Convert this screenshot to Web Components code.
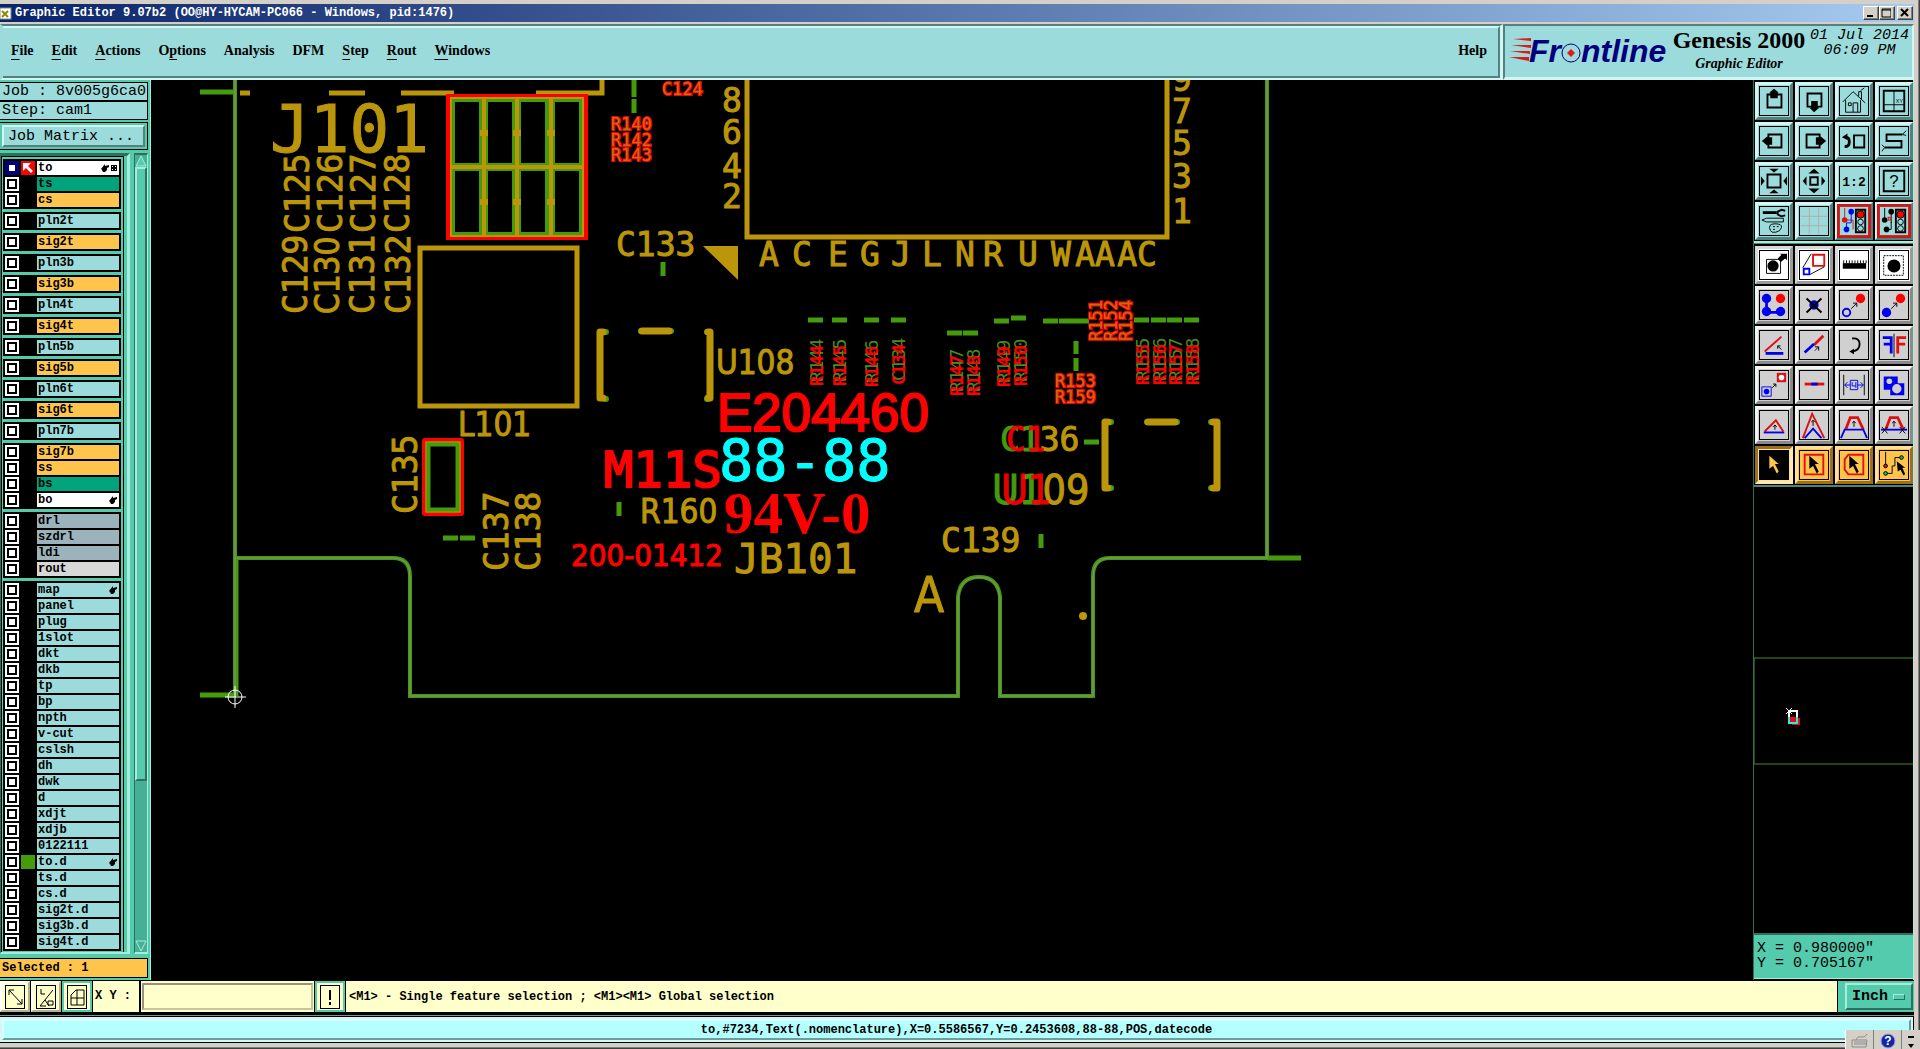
<!DOCTYPE html>
<html lang="en">
<head>
<meta charset="utf-8">
<title>Graphic Editor 9.07b2</title>
<style>
    :root {
        --teal: #54cbac;
        --teal-dark: #2f6f5e;
        --teal-light: #a6eddb;
        --pale: #9cdbdb;
        --pale-dark: #54807f;
        --pale-light: #d2f6f4;
        --cream: #ffffcc;
        --amber: #ffc44c;
        --mono: "Liberation Mono", monospace;
        --serif: "Liberation Serif", serif;
    }
    html, body {
        margin: 0;
        height: 100%;
        background: #d4d0c8;
        overflow: hidden;
    }
</style>
</head>
<body>
<gx-window caption="Graphic Editor 9.07b2 (OO@HY-HYCAM-PC066 - Windows, pid:1476)">
    <gx-menubar slot="menu"></gx-menubar>
    <gx-brand slot="menu"></gx-brand>
    <gx-sidebar slot="main"></gx-sidebar>
    <gx-board slot="main"></gx-board>
    <gx-tools slot="main"></gx-tools>
    <gx-prompt slot="foot">&lt;M1&gt; - Single feature selection ; &lt;M1&gt;&lt;M1&gt; Global selection</gx-prompt>
    <gx-status slot="foot">to,#7234,Text(.nomenclature),X=0.5586567,Y=0.2453608,88-88,POS,datecode</gx-status>
</gx-window>

<script>
"use strict";

// base class: every component only supplies its markup.
class Base extends HTMLElement {
    constructor() {
        super();
        this.attachShadow({ mode: 'open' });
        const temp = document.createElement('template');
        temp.innerHTML = `<style>:host,*{box-sizing:border-box}</style>` + this.render();
        this.shadowRoot.appendChild(temp.content.cloneNode(true));
    }
    render() { return ''; }
}

// window frame: caption bar, then menu, main and foot areas.
class GxWindow extends Base {
    render() {
        return `
<style>
    :host { display: flex; flex-direction: column; height: 100vh; padding: 4px 6px 6px 0; position: relative;
        background: #d4d0c8; box-shadow: inset -1px -1px #404040, inset -2px -2px #808080; }
    header { display: flex; align-items: center; height: 18px; padding: 0 1px 0 0; color: #fff;
        background: linear-gradient(90deg, #0a246a, #a6caf0); font: bold 12px/18px var(--mono); }
    header svg { margin-right: 3px; }
    h1 { flex: 1; margin: 0; font: inherit; white-space: pre; }
    header button { width: 16px; height: 14px; padding: 0; border: 1px solid; border-color: #fff #404040 #404040 #fff;
        background: #d4d0c8; box-shadow: inset -1px -1px #808080; display: flex; }
    header button:last-child { margin-left: 2px; }
    .menu { display: flex; height: 56px; margin-top: 2px; }
    .main { display: flex; flex: 1; min-height: 0; background: #000; }
    .tray { position: absolute; right: 0; bottom: 0; width: 75px; height: 19px; display: flex;
        background: #d4d0c8; border-left: 1px solid #fff; }
    .tray button { flex: 1; border: 0; border-right: 1px solid #808080; background: none; padding: 2px 0 0; line-height: 0; }
    .tray button:last-child { flex: 0 0 18px; border: 0; }
</style>
<header>
    <svg width="12" height="14"><rect y="2" width="11" height="11" fill="#fff" stroke="#888"/><path d="M2 5l6 6M8 5l-6 6" stroke="#8a8a00" stroke-width="2"/></svg>
    <h1></h1>
    <button aria-label="Minimize"><svg width="14" height="12"><path d="M3 9h6" stroke="#000" stroke-width="2"/></svg></button>
    <button aria-label="Maximize"><svg width="14" height="12"><path d="M2 2h9v8h-9zM2 3h9" fill="none" stroke="#000"/></svg></button>
    <button aria-label="Close"><svg width="14" height="12"><path d="M3 2l7 7M10 2l-7 7" stroke="#000" stroke-width="2"/></svg></button>
</header>
<div class="menu"><slot name="menu"></slot></div>
<div class="main"><slot name="main"></slot></div>
<slot name="foot"></slot>
<div class="tray">
    <button aria-label="Keyboard"><svg width="18" height="16"><path d="M1 7h15l-1 7h-14zM3 9h12M3 11h12M5 7q1-4 5-3t6-3" fill="none" stroke="#8c8c8c"/></svg></button>
    <button aria-label="Help"><svg width="16" height="16"><circle cx="8" cy="8" r="7" fill="#1525a8" stroke="#9aa4d8"/><text x="8" y="12" text-anchor="middle" fill="#fff" font-family="Liberation Sans" font-weight="bold" font-size="12">?</text></svg></button>
    <button aria-label="Options"><svg width="8" height="16"><path d="M1 4h6" stroke="#000" stroke-width="2"/><path d="M1 11h6l-3 4z"/></svg></button>
</div>`;
    }
    connectedCallback() {
        this.shadowRoot.querySelector('h1').textContent = this.getAttribute('caption');
    }
}
customElements.define('gx-window', GxWindow);

class GxMenubar extends Base {
    render() {
        // the underscore stands before the mnemonic letter
        const items = ['_File', '_Edit', '_Actions', 'O_ptions', 'Analysis', 'DFM', '_Step', '_Rout', '_Windows', 'Help'];
        return `
<style>
    :host { flex: 1; display: flex; background: var(--pale); border: solid; border-width: 2px 3px;
        border-color: var(--pale-dark) var(--pale-light) var(--pale-light) var(--pale); }
    nav { flex: 1; display: flex; align-items: center; gap: 18px; padding: 0 11px 2px 8px;
        border: solid; border-width: 2px 2px 2px 0; border-color: var(--pale-light) var(--pale-dark) var(--pale-dark); }
    button { padding: 0; border: 0; background: none; font: bold 14px/18px var(--serif); color: #000; }
    button:last-child { margin-left: auto; }
    u { text-underline-offset: 4px; }
</style>
<nav>${items.map(t => `<button>${t.replace(/_(.)/, '<u>$1</u>')}</button>`).join('')}</nav>`;
    }
}
customElements.define('gx-menubar', GxMenubar);

class GxBrand extends Base {
    render() {
        return `
<style>
    :host { flex: 0 0 411px; display: flex; align-items: flex-start; background: var(--pale); color: #000;
        border: solid; border-width: 2px 2px 3px 2px; border-color: var(--pale-dark) var(--pale-light) var(--pale-light) var(--pale-dark); }
    svg { flex: none; margin: 8px 3px 0 3px; }
    .name { flex: 0 0 136px; text-align: center; }
    h2 { margin: 0; font: bold 24px/28px var(--serif); white-space: nowrap; }
    em { font: italic bold 14px/20px var(--serif); display: block; }
    time { flex: 1; padding-top: 2px; text-align: center; font: italic 15px/15px var(--mono); white-space: nowrap; }
</style>
<svg width="160" height="34" role="img" aria-label="Frontline">
    <path d="M5 5l18-1v3zM3 11h20v3zM2 17h20v3zM1 23h20v4z" fill="#e01818"/>
    <text x="21" y="28" font-family="Liberation Sans" font-size="32" font-weight="bold" font-style="italic" fill="#00007c">Fr<tspan x="73">ntline</tspan></text>
    <circle cx="63" cy="19" r="9" fill="none" stroke="#00007c"/><path d="M63 15l4 4-4 4-4-4z" fill="#e01818"/>
</svg>
<div class="name"><h2>Genesis 2000</h2><em>Graphic Editor</em></div>
<time>01 Jul 2014<br>06:09 PM</time>`;
    }
}
customElements.define('gx-brand', GxBrand);

const HAND = '<path d="M0 5L4 0V2L8 1V3L6 4V6L4 8H2L1 6z" fill="#000"/>';

// one layer row: tick box, colour cell and name.
class GxLayer extends Base {
    render() {
        return `
<style>
    :host { display: block; --back: var(--pale); }
    :host([kind="doc"]) { --back: #fff; }
    :host([kind="mask"]) { --back: #00a37c; }
    :host([kind="sig"]) { --back: var(--amber); }
    :host([kind="drill"]) { --back: #9cb3bb; }
    :host([kind="rout"]) { --back: #d8d8d8; }
    label { display: flex; gap: 2px; height: 14px; font: bold 12px/14px var(--mono); color: #000; }
    input { appearance: none; flex: none; width: 14px; height: 14px; margin: 0; background: #fff; border: 2px solid #fff;
        box-shadow: inset 0 0 0 2px #000; }
    input:checked { border-color: #00007c; background: #fff; box-shadow: inset 0 0 0 2px #00007c; }
    i { flex: none; width: 14px; height: 14px; background: var(--cell, #000); }
    span { flex: 1; display: flex; align-items: center; gap: 2px; background: var(--back); padding: 0 2px 0 1px; }
    b { flex: 1; }
    svg { flex: none; }
</style>
<label><input type="checkbox"><i></i><span><b></b></span></label>`;
    }
    connectedCallback() {
        const root = this.shadowRoot;
        root.querySelector('b').textContent = this.getAttribute('name');
        root.querySelector('input').checked = this.hasAttribute('work');
        if (this.hasAttribute('work')) {
            root.querySelector('i').innerHTML = '<svg width="14" height="14" style="display:block;background:#f00"><path d="M2 2h8l-3 3 5 5-2 2-5-5-3 3z" fill="#fff"/></svg>';
        }
        if (this.hasAttribute('hand')) {
            root.querySelector('span').insertAdjacentHTML('beforeend', `<svg width="8" height="8">${HAND}</svg>`);
        }
        if (this.hasAttribute('work')) {
            root.querySelector('span').insertAdjacentHTML('beforeend', '<svg width="6" height="6"><path d="M0 0h6v6h-6zM1 1v1h1v-1zM4 1v1h1v-1zM1 4v1h1v-1zM4 4v1h1v-1z" fill-rule="evenodd"/></svg>');
        }
    }
}
customElements.define('gx-layer', GxLayer);

// groups of layers; "name:kind:flags"
const GROUPS = [
    'to:doc:work hand,ts:mask,cs:sig', 'pln2t', 'sig2t:sig', 'pln3b', 'sig3b:sig', 'pln4t', 'sig4t:sig', 'pln5b',
    'sig5b:sig', 'pln6t', 'sig6t:sig', 'pln7b', 'sig7b:sig,ss:sig,bs:mask,bo:doc:hand',
    'drl:drill,szdrl:drill,ldi:drill,rout:rout',
    'map::hand,panel,plug,1slot,dkt,dkb,tp,bp,npth,v-cut,cslsh,dh,dwk,d,xdjt,xdjb,0122111,to.d::hand,ts.d,cs.d,sig2t.d,sig3b.d,sig4t.d'
];

class GxSidebar extends Base {
    render() {
        const row = text => {
            const [name, kind = '', flags = ''] = text.split(':');
            const cell = name === 'to.d' ? ' style="--cell:#449b0c"' : '';
            return `<gx-layer name="${name}" kind="${kind}" ${flags}${cell}></gx-layer>`;
        };
        return `
<style>
    :host { flex: 0 0 151px; display: flex; flex-direction: column; padding: 2px 2px 2px 0; background: var(--teal);
        border-right: 1px solid var(--teal-light); font: 15px/17px var(--mono); color: #000; }
    .info { border: 1px solid #000; border-left: 0; background: var(--pale); height: 19px; padding-left: 2px; white-space: pre; }
    .box { border: 1px solid #000; border-left: 0; padding: 2px; margin-top: 2px; height: 28px; }
    .box button { width: 100%; height: 22px; padding: 0 4px; text-align: left; font: inherit; background: var(--pale);
        border: 2px solid; border-color: var(--pale-light) var(--pale-dark) var(--pale-dark) var(--pale-light); }
    .pane { flex: 1; min-height: 0; display: flex; gap: 4px; margin-top: 3px; }
    .frame { flex: 1; min-width: 0; display: flex; border-top: 3px solid var(--teal-dark); border-bottom: 2px solid var(--teal-light);
        border-right: 3px solid var(--teal-light); border-left: 1px solid var(--teal-dark); padding-right: 3px;
        box-shadow: inset -3px 0 var(--teal); }
    .list { flex: 1; border: 1px solid #000; border-bottom: 0; display: flex; flex-direction: column; gap: 3px; overflow: hidden;
        padding: 2px 2px 0 1px; }
    .group { flex: none; background: #000; padding: 2px; display: flex; flex-direction: column; gap: 2px; }
    .bar { flex: 0 0 14px; display: flex; flex-direction: column; background: #45b095; border: solid; border-width: 2px 1px;
        border-color: var(--teal-dark) var(--teal-light) var(--teal-light) var(--teal-dark); }
    .thumb { flex: 0 0 614px; background: var(--teal); border: 2px solid;
        border-color: var(--teal-light) var(--teal-dark) var(--teal-dark) var(--teal-light); }
    .space { flex: 1; }
    .picked { margin-top: 4px; height: 20px; border: 1px solid #000; border-left: 0; background: var(--amber); padding-left: 2px;
        font: bold 12px/18px var(--mono); }
</style>
<div class="info">Job : 8v005g6ca0</div>
<div class="info">Step: cam1</div>
<div class="box"><button>Job Matrix ...</button></div>
<div class="pane">
    <div class="frame"><div class="list">${GROUPS.map(g => `<div class="group">${g.split(',').map(row).join('')}</div>`).join('')}</div></div>
    <div class="bar">
        <svg width="12" height="12"><path d="M6 1L11 11H1z" fill="#54cbac" stroke="#a6eddb"/></svg>
        <div class="thumb"></div><div class="space"></div>
        <svg width="12" height="12"><path d="M6 11L11 1H1z" fill="#45b095" stroke="#a6eddb"/></svg>
    </div>
</div>
<div class="picked">Selected : 1</div>`;
    }
}
customElements.define('gx-sidebar', GxSidebar);

// the board drawing. Coordinates are those of the whole editor window.
class GxBoard extends Base {
    render() {
        const up = (x, y, t, c = '') => `<text class="${c}" transform="translate(${x} ${y}) rotate(-90)">${t}</text>`;
        const at = (x, y, t, c = '') => `<text class="${c}" x="${x}" y="${y}">${t}</text>`;
        const dash = (x, y) => `M${x - 7} ${y}h15`;
        const refs = [[823, 386, 'R144'], [846, 386, 'R145'], [878, 387, 'R146'], [905, 385, 'C134'], [963, 396, 'R147'],
            [980, 396, 'R148'], [1010, 387, 'R149'], [1027, 386, 'R150'], [1149, 385, 'R155'], [1166, 385, 'R156'],
            [1182, 385, 'R157'], [1199, 385, 'R158']];
        const dashes = [[815, 320], [839, 320], [871, 320], [898, 320], [954, 333], [970, 333], [1001, 321], [1018, 318],
            [1050, 321], [1066, 321], [1081, 321], [1141, 320], [1158, 320], [1174, 320], [1191, 320], [450, 538], [467, 538], [1091, 442]];
        const pins = [['A', 769], ['C', 802], ['E', 838], ['G', 870], ['J', 901], ['L', 932], ['N', 965], ['R', 993],
            ['U', 1028], ['W', 1061], ['AA', 1095], ['AC', 1137]];
        const cells = [455, 488, 521, 555].map(x => `M${x} 102h24v61h-24zM${x} 171h24v61h-24z`).join('');
        const edge = 'M235 80V696M235 558H393Q410 558 410 576V696H958V597Q960 577 979 577Q998 577 1000 597V696H1093V576Q1093 558 1110 558H1267V80';
        return `
<style>
    :host { flex: 1; min-width: 0; background: #000; overflow: hidden; }
    svg { display: block; width: 100%; height: 100%; }
    text { font: 33px "DejaVu Sans Mono", monospace; fill: #bc960a; stroke: #bc960a; stroke-width: 1px; }
    .c { font-family: "DejaVu Sans Condensed", "DejaVu Sans", sans-serif; }
    .mid { text-anchor: middle; }
    .small { font-size: 17px; fill: #c86a10; stroke: #f00; stroke-width: 2px; paint-order: stroke; }
    .thick { font-size: 17px; font-weight: bold; fill: #f00; stroke: none; }
    .ghost { font-size: 18px; fill: #4a8a20; stroke: none; }
    .gold { fill: none; stroke: #bc960a; }
    .green { fill: none; stroke: #449b0c; }
    .red { fill: #f00; stroke: #f00; }
    .lime { fill: #449b0c; stroke: #449b0c; }
</style>
<svg><g transform="translate(-151 -80)">
    <path class="green" stroke-width="5" d="M200 92H233M200 695H236M236 558V696M1267 558H1301"/>
    <path class="green" stroke-width="4" d="${edge}"/>
    <path d="${edge}" fill="none" stroke="#8c8c84"/>
    <path class="gold" stroke-width="5" d="M240 93H250M329 93H365M401 93H454M536 93H602V80M747 80V237H1167V80"/>
    <rect class="gold" x="420" y="248" width="157" height="158" stroke-width="5"/>
    <path d="M703 246H738V280z" fill="#bc960a"/>

    <rect x="448" y="96" width="138" height="142" fill="#449b0c" stroke="#f00" stroke-width="4"/>
    <path d="${cells}" fill="#000"/>
    <path class="gold" stroke-width="4" d="M484 99V236M517 99V236M551 99V236M451 167H583"/>
    <path class="gold" stroke-width="2" d="M451 98H583V236H451z"/>
    <path class="gold" stroke-width="8" d="M484 130v6M517 130v6M551 130v6M484 199v6M517 199v6M551 199v6"/>
    <rect x="424" y="440" width="38" height="74" rx="1" fill="none" stroke="#f00" stroke-width="4"/>
    <rect x="428" y="444" width="30" height="66" fill="none" stroke="#449b0c" stroke-width="5"/>
    <rect x="426" y="442" width="34" height="70" class="gold"/>

    <g stroke-linecap="round">
        <path class="green" stroke-width="6" d="M605 332h1M605 399h1M707 332h1M707 399h1M641 331h30M1110 422h1M1110 488h1M1211 422h1M1211 488h1M1147 422h30"/>
        <path class="gold" stroke-width="7" stroke-linejoin="round" d="M603 332H600V398H603M708 332H710V398H708M642 331H669M1108 422H1105V488H1108M1213 422H1217V488H1213M1148 422H1175"/>
    </g>
    <path class="green" stroke-width="5" d="${dashes.map(d => dash(...d)).join('')}M634 80V97M634 99V113M663 262V276M619 502V516M1076 341V354M1076 358V371M1041 534V548"/>
    <circle cx="1083" cy="616" r="4" fill="#bc960a"/>

    <text x="270" y="152" style="font-size:66px">J101</text>
    ${up(309, 233, 'C125')}${up(342, 233, 'C126')}${up(375, 233, 'C127')}${up(409, 233, 'C128')}
    ${up(307, 314, 'C129')}${up(339, 314, 'C130', 'c')}${up(374, 314, 'C131')}${up(410, 314, 'C132')}
    ${up(417, 514, 'C135')}${up(508, 571, 'C137')}${up(540, 571, 'C138')}
    ${at(616, 256, 'C133')}${at(458, 436, 'L101', 'c')}${at(716, 374, 'U108', 'c')}${at(640, 523, 'R160', 'c')}${at(941, 552, 'C139')}
    ${at(732, 112, '8', 'mid')}${at(732, 144, '6', 'mid')}${at(732, 178, '4', 'mid')}${at(732, 208, '2', 'mid')}
    ${at(1182, 91, '9', 'mid')}${at(1182, 123, '7', 'mid')}${at(1182, 155, '5', 'mid')}${at(1182, 188, '3', 'mid')}${at(1182, 223, '1', 'mid')}
    ${pins.map(p => at(p[1], 266, p[0], 'mid')).join('')}
    <text x="734" y="573" style="font-size:41px">JB101</text>
    <text x="929" y="612" class="mid c" style="font-size:49px">A</text>
    ${at(662, 95, 'C124', 'small')}${at(611, 130, 'R140', 'small')}${at(611, 146, 'R142', 'small')}${at(611, 161, 'R143', 'small')}
    ${at(1055, 387, 'R153', 'small')}${at(1055, 403, 'R159', 'small')}
    ${up(1102, 341, 'R151', 'small')}${up(1117, 341, 'R152', 'small')}${up(1132, 341, 'R154', 'small')}
    ${refs.map(r => up(r[0], r[1] - 4, r[2], 'ghost') + up(r[0], r[1], r[2], 'thick')).join('')}

    <text x="717" y="431" class="red" style="font:53px 'Liberation Sans',sans-serif;stroke-width:2px">E204460</text>
    <text x="604" y="487" class="red" style="font-size:49px;stroke-width:2px">M11S</text>
    <text x="719" y="481" style="font-size:57px;fill:#0ff;stroke:#0ff">88-88</text>
    <text x="724" y="533" class="red" style="font:bold 59px 'Liberation Serif',serif;stroke:none">94V-0</text>
    <text x="571" y="566" class="red c" style="font-size:31px">200-01412</text>
    <text x="1000" y="451"><tspan class="lime">C1</tspan>36</text>
    <text x="1006" y="451" class="red" opacity="0.9">C1</text>
    <text x="992" y="504" class="c" style="font-size:41px"><tspan class="lime">U1</tspan>09</text>
    <text x="1001" y="504" class="red c" opacity="0.9" style="font-size:41px">U1</text>

    <path d="M225 697H246M235 686V708" stroke="#fff"/><circle cx="235" cy="697" r="7" fill="none" stroke="#fff"/>
</g></svg>`;
    }
}
customElements.define('gx-board', GxBoard);

// icon bodies on a 30x30 grid
const K = 'fill="none" stroke="#000" stroke-width="2"';
const N = 'fill="none" stroke="#000"';
const R = 'fill="none" stroke="#e01010" stroke-width="2"';
const B = 'fill="none" stroke="#0000f0" stroke-width="2"';
const ARROW = 'M10 5L20 14H16L20 22 18 24 14 16 10 19z';
const LIGHT = `<path d="M17 3h10v24h-10z" ${K}/><circle cx="22" cy="8" r="4" fill="#f00" stroke="#000"/><circle cx="22" cy="16" r="3" ${N}/><circle cx="22" cy="23" r="3" ${N}/>`;
const ICONS = {
    'Scroll up': `<path d="M8 8h15v14h-15z" ${K}/><path d="M15 2L20 6H19V12H11V6H10z"/>`,
    'Scroll down': `<path d="M8 7h15v14h-15z" ${K}/><path d="M12 15H19V22H21L15 27 10 22H12z"/>`,
    'Home view': `<path d="M3 16L14 5 27 17M6 14V27H22V14M9 17h3v3h-3zM14 27V17h5v10M20 10V5h3v8M22 4l4-3" ${N}/>`,
    'Coordinate window': `<path d="M4 4h22v22h-22z" ${K}/><path d="M15 4V26M4 19H26" ${N}/><text x="17" y="17" font-family="Liberation Sans" font-size="6">XY</text>`,
    'Scroll left': `<path d="M9 8h14v14h-14z" ${K}/><path d="M2 15L8 10V11H13V19H8V20z"/>`,
    'Scroll right': `<path d="M7 8h14v14h-14z" ${K}/><path d="M28 15L22 10V11H17V19H22V20z"/>`,
    'Previous view': `<path d="M15 9h11v13h-11z" ${K}/><path d="M5 21Q10 21 10 16T6 11" fill="none" stroke="#000" stroke-width="3"/><path d="M2 11L8 7V14z"/>`,
    'Snake': `<path d="M24 8H7V15H23V22H5" ${K}/><path d="M24 8l4-4M24 8l4 1M5 22l-3-3M5 22l-3 4" ${N}/>`,
    'Zoom in': `<path d="M8 8h14v14h-14z" ${K}/><path d="M10 2h10l-5 4zM10 28h10l-5-4zM1 10v10l4-5zM29 10v10l-4-5z"/>`,
    'Zoom out': `<path d="M11 11h8v8h-8z" ${K}/><path d="M9 7h12l-6-5zM9 23h12l-6 5zM7 10v10l-4-5zM23 10v10l4-5z"/>`,
    'Scale': `<text x="15" y="20" text-anchor="middle" font-family="Liberation Mono" font-weight="bold" font-size="14">1:2</text>`,
    'Query': `<path d="M4 4h22v22h-22z" ${K}/><text x="15" y="21" text-anchor="middle" font-family="Liberation Sans" font-size="18">?</text>`,
    'Setup': `<path d="M3 6H18" stroke="#000" stroke-width="3"/><path d="M27 4L23 3 19 5V8L23 10 27 9" ${K}/><path d="M2 14l5-2h18v4h-18zM11 25q-3-7 5-7t7 4-6 5-6-2M14 21h2M18 21h2M14 24h2" ${N}/>`,
    'Grid': `<path d="M10 1V29M20 1V29M1 10H29M1 20H29" fill="none" stroke="#b9a9ad"/>`,
    'Net red': `<path d="M5 1V14H14V24" fill="none" stroke="#e01010"/><circle cx="5" cy="14" r="3" fill="#e01010"/><path d="M12 5V17H7V24" fill="none" stroke="#0000f0"/><circle cx="12" cy="5" r="3" fill="#0000f0"/><circle cx="7" cy="24" r="3" fill="#0000f0"/>${LIGHT}`,
    'Net black': `<path d="M5 1V14M12 5V17M12 16V24H7" ${N}/><path d="M8 11H13M8 14H13M9 11V14M11 11V14" stroke="#e01010"/><circle cx="5" cy="14" r="3"/><circle cx="12" cy="5" r="3"/><circle cx="7" cy="24" r="3"/>${LIGHT}`,
    'Select feature': `<path d="M7 9h15v15h-15z" ${N}/><circle cx="14" cy="16" r="6"/><path d="M19 8l4-4-2-1h8v7l-2-2-5 4z"/>`,
    'Resize': `<path d="M14 4h12v12h-12z" ${R}/><path d="M4 19h6v6h-6z" ${B}/><path d="M3 18L12 3M11 25L26 17" ${N}/>`,
    'Measure': `<path d="M3 13h25v6h-25z"/><path d="M4 13v-3M7 13v-3M10 13v-3M13 13v-3M16 13v-3M19 13v-3M22 13v-3M25 13v-3M28 13v-3" stroke="#000"/>`,
    'Select area': `<path d="M4 5h21v21h-21z" ${N} stroke-dasharray="2 1"/><circle cx="15" cy="16" r="7"/>`,
    'Chain': `<path d="M7 8V23H22" fill="none" stroke="#0000f0" stroke-width="3"/><g fill="#0000f0"><circle cx="7" cy="8" r="5"/><circle cx="7" cy="22" r="5"/><circle cx="22" cy="22" r="5"/></g><circle cx="22" cy="8" r="5" fill="#f00"/>`,
    'Delete': `<circle cx="15" cy="15" r="5" fill="#0000c8"/><path d="M7 8L23 23M23 8L7 23" ${K}/>`,
    'Copy': `<circle cx="7" cy="23" r="4" ${B}/><circle cx="22" cy="8" r="5" fill="#f00"/><path d="M12 19l6-6M14 13h4v4" ${N}/>`,
    'Move': `<circle cx="7" cy="23" r="5" fill="#0000f0"/><circle cx="22" cy="8" r="5" fill="#f00"/><path d="M12 19l6-6M14 13h4v4" ${N}/>`,
    'Rotate line': `<path d="M5 22L23 6" ${R}/><path d="M6 24H25" stroke="#0000f0" stroke-width="3"/><path d="M23 20l-4-4M19 19v-3h3" ${N}/>`,
    'Stretch line': `<path d="M15 15L25 5" stroke="#e01010" stroke-width="3"/><path d="M5 23L15 14" stroke="#0000f0" stroke-width="3"/><path d="M16 21l4-4M16 17h4v4" ${N}/>`,
    'Rotate': `<path d="M13 8Q21 7 21 14T13 22" ${K}/><path d="M10 22l5-3v6z"/>`,
    'Mirror': `<path d="M3 7H12V24M4 14H12" fill="none" stroke="#0000f0" stroke-width="3"/><path d="M28 7H19V24M27 14H19" fill="none" stroke="#e01010" stroke-width="3"/><path d="M15 3V28" ${N}/>`,
    'Replace': `<path d="M18 2h10v10h-10z" fill="#e01010"/><circle cx="23" cy="7" r="3" fill="#fff"/><path d="M2 17h10v10h-10z" fill="#d0d0d0" stroke="#0000f0"/><circle cx="7" cy="22" r="3" fill="#0000f0"/><path d="M13 18l4-4M14 14h3v3" ${N}/>`,
    'Merge line': `<path d="M5 14H26" stroke="#e01010" stroke-width="3"/><path d="M12 14H19" stroke="#0000c8" stroke-width="3"/>`,
    'Spacing': `<path d="M4 4V26M26 4V26" ${N}/><path d="M5 15H11M19 15H25M8 12L5 15 8 18M22 12L25 15 22 18M11 10h8v10h-8zM13 12v4h4v-4M17 18v-2" fill="none" stroke="#0000f0"/>`,
    'Clip': `<path d="M4 6h15v7h7v13h-15v-6h-7z" fill="#0000f0"/><circle cx="10" cy="11" r="3" fill="#d0d0d0"/><circle cx="18" cy="19" r="5" fill="#d0d0d0"/>`,
    'Arc low': `<path d="M5 22L17 10 25 22" ${R}/><path d="M4 23H26" ${B}/><path d="M16 20v-5M14 17l2-2 2 2" ${N}/>`,
    'Arc high': `<path d="M3 29L13 3 26 29" ${R}/><path d="M5 29L14 19 23 29" ${B}/><path d="M14 16v-6M12 12l2-2 2 2" ${N}/>`,
    'Trapeze': `<path d="M6 20L11 7H19L25 20" ${R} style="stroke-width:3px"/><path d="M1 29L5 20H25L29 29" ${B}/><path d="M15 17v-6M13 13l2-2 2 2" ${N}/>`,
    'Trapeze cut': `<path d="M6 20L11 7H19L25 20" ${R} style="stroke-width:3px"/><path d="M1 20H29" ${B}/><path d="M15 17v-6M13 13l2-2 2 2M2 17l6 7M8 17l-6 7M21 17l6 7M27 17l-6 7" ${N}/>`,
    'Pick': `<path d="M0 0h30v30h-30z"/><path d="${ARROW}" fill="#ffc44c"/>`,
    'Pick rectangle': `<path d="M5 4h20v21h-20z" ${R}/><path d="${ARROW}"/>`,
    'Pick polygon': `<path d="M9 4H25V25H9L5 20V9z" ${R}/><path d="${ARROW}"/>`,
    'Pick net': `<path d="M6 1V16M6 24H13V16H16V7H23" ${N}/><circle cx="6" cy="16" r="2" fill="#e01010" stroke="#000"/><circle cx="6" cy="24" r="2" fill="#20c020" stroke="#000"/><circle cx="23" cy="7" r="2" fill="#20c020" stroke="#000"/><path d="M18 11L27 18H24L27 25 25 26 22 20 19 22z"/>`
};

class GxTool extends Base {
    render() {
        return `
<style>
    :host { display: block; --face: var(--pale); --lo: var(--pale-dark); --hi: var(--pale-light); --ink: #000; }
    :host([tone="red"]) { --ink: #c01010; }
    :host([tone="grey"]) { --face: #d0d0d0; --lo: #8a8a8a; --hi: #f4f4f4; }
    :host([tone="white"]) { --face: #fff; --lo: #9a9a9a; --hi: #d8d8d8; }
    :host([tone="amber"]) { --face: var(--amber); --lo: #9a7020; --hi: #ffe09a; }
    :host([tone="on"]) { --face: #ffe09a; --lo: #ffe8b0; --hi: #9a7020; }
    button { display: flex; width: 38px; height: 38px; padding: 1px; border: 3px solid;
        border-color: var(--hi) var(--lo) var(--lo) var(--hi); background: var(--face); }
    svg { width: 30px; height: 30px; border: 1px solid var(--ink); }
    :host([tone="red"]) svg { box-shadow: 0 0 0 2px #c81818; border-color: #e02020; }
</style>
<button><svg viewBox="0 0 30 30"></svg></button>`;
    }
    connectedCallback() {
        const name = this.getAttribute('name');
        this.shadowRoot.querySelector('button').setAttribute('aria-label', name);
        this.shadowRoot.querySelector('svg').innerHTML = ICONS[name];
    }
}
customElements.define('gx-tool', GxTool);

class GxTools extends Base {
    render() {
        const tone = i => i < 14 ? '' : i < 16 ? 'red' : i < 20 ? 'white' : i < 36 ? 'grey' : i === 36 ? 'on' : 'amber';
        const all = Object.keys(ICONS).map((n, i) => `<gx-tool name="${n}" tone="${tone(i)}"></gx-tool>`);
        return `
<style>
    :host { flex: 0 0 161px; display: flex; flex-direction: column; background: #000;
        border-left: 1px solid var(--teal-dark); border-right: 1px solid var(--teal-light); padding-top: 1px; }
    .grid { display: grid; grid-template-columns: repeat(4, 38px); gap: 2px; padding: 1px 0 1px 1px; border-bottom: 2px solid var(--teal-light); }
    .grid + .grid { padding-top: 2px; border-top: 1px solid var(--teal-dark); border-color: #508478; }
    .map { flex: 1; }
    .map svg { display: block; width: 100%; height: 100%; }
    dl { margin: 0 0 1px; padding: 6px 3px 7px; background: var(--teal); border: solid; border-width: 2px 0 1px;
        border-color: var(--teal-dark) transparent var(--teal-light); font: 15px/15px var(--mono); color: #000; white-space: pre; }
    dl div { display: flex; }
    dd { margin: 0; }
</style>
<div class="grid">${all.slice(0, 16).join('')}</div>
<div class="grid">${all.slice(16).join('')}</div>
<div class="map"><svg>
    <path d="M1000 171H0V277H1000" fill="none" stroke="#4c8a1c"/>
    <path d="M32 221l6 6M38 221l-6 6" stroke="#fff"/>
    <path d="M38 231h8v7h-8z" fill="#d01818"/>
    <path d="M35 230V224H43V230" fill="none" stroke="#fff" stroke-width="2"/>
    <path d="M35 230V236H43V230" fill="#e01010" stroke="#40e0e0" stroke-width="2"/>
</svg></div>
<dl><div><dt>X = </dt><dd>0.980000"</dd></div><div><dt>Y = </dt><dd>0.705167"</dd></div></dl>`;
    }
}
customElements.define('gx-tools', GxTools);

class GxPrompt extends Base {
    render() {
        return `
<style>
    :host { display: flex; flex: none; height: 36px; padding: 1px 0 3px; gap: 1px; background: #000; border-bottom: 1px solid #7c9494;
        font: bold 12px/31px var(--mono); color: #000; }
    button { flex: 0 0 30px; height: 31px; padding: 1px; border: 2px solid; border-color: #fff #b4b08c #b4b08c #fff; background: var(--cream); }
    button.on { outline: 2px solid var(--teal); outline-offset: -2px; border-color: var(--teal); }
    button svg { display: block; width: 20px; height: 24px; margin: auto; border: 1px solid #000; }
    label { flex: 0 0 46px; padding-left: 2px; background: var(--cream); white-space: pre; }
    .field { flex: 0 0 174px; padding: 2px 1px; background: var(--cream); border-left: 1px solid #000; }
    input { display: block; width: 100%; height: 27px; padding: 0 5px; font: inherit; background: var(--cream);
        border: 2px solid; border-color: #98947c #c8c4a0 #c8c4a0 #98947c; }
    p { flex: 1; margin: 0; padding: 1px 0 0 3px; background: var(--cream); white-space: pre; }
    .unit { flex: 0 0 76px; padding: 2px 1px 2px 7px; background: var(--teal); display: flex; position: relative; }
    select { appearance: none; width: 100%; padding: 0 5px; font: bold 15px/20px var(--mono); color: #000; background: var(--teal);
        border: 2px solid; border-radius: 0; border-color: var(--teal-light) var(--teal-dark) var(--teal-dark) var(--teal-light); }
    .unit i { position: absolute; right: 9px; top: 13px; width: 12px; height: 6px; pointer-events: none; border: 1px solid;
        border-color: var(--teal-light) var(--teal-dark) var(--teal-dark) var(--teal-light); }
</style>
<button aria-label="Snap off"><svg><path d="M3 4l13 14M3 9v-5h5M16 13v5h-5" fill="none" stroke="#000"/></svg></button>
<button aria-label="Snap angle"><svg><path d="M3 20L16 4M3 20h6M4 3v5h4M11 15h5v4h-5zM8 14l4 6" fill="none" stroke="#000"/></svg></button>
<button class="on" aria-label="Snap grid"><svg><path d="M3 9l5-5h8v15h-13zM9 4v15M3 12h13" fill="none" stroke="#000"/></svg></button>
<label for="xy">X Y :</label>
<div class="field"><input id="xy" type="text"></div>
<button class="on" aria-label="Apply"><svg><path d="M9 4v10M9 16v3" stroke="#000" stroke-width="2"/></svg></button>
<p><slot></slot></p>
<div class="unit"><select aria-label="Units"><option>Inch</option><option>MM</option></select><i></i></div>`;
    }
}
customElements.define('gx-prompt', GxPrompt);

class GxStatus extends Base {
    render() {
        return `
<style>
    :host { display: block; flex: none; height: 27px; border: 1px solid #000; border-left: 0; padding: 2px; background: #d4f8f8; }
    p { margin: 0; text-align: center; height: 21px; background: #b4ffff; font: bold 12px/18px var(--mono); color: #000;
        border: 2px solid; border-color: #dcffff #6c9c9c #6c9c9c #dcffff; }
</style>
<p><slot></slot></p>`;
    }
}
customElements.define('gx-status', GxStatus);
</script>
</body>
</html>
